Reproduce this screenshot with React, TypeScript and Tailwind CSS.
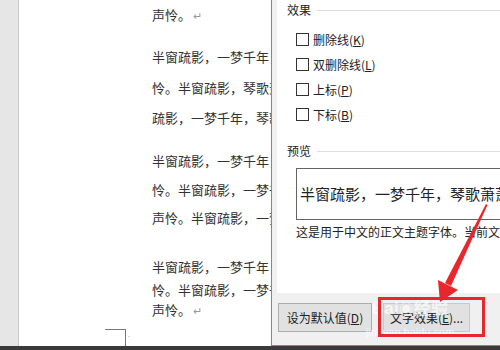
import React from 'react';

const cjk = { fontFamily: '"Noto Sans CJK SC", "Microsoft YaHei", sans-serif' };

// document lines: [margin-top, text]
const docLines: { mt: string; text: string; mark?: boolean }[] = [
  { mt: 'mt-[5px]', text: '声怜。', mark: true },
  { mt: 'mt-[22px]', text: '半窗疏影，一梦千年，琴歌萧萧' },
  { mt: 'mt-[11px]', text: '怜。半窗疏影，琴歌萧萧' },
  { mt: 'mt-[10px]', text: '疏影，一梦千年，琴歌萧萧' },
  { mt: 'mt-[23px]', text: '半窗疏影，一梦千年，琴歌' },
  { mt: 'mt-[9px]', text: '怜。半窗疏影，一梦千年' },
  { mt: 'mt-[8px]', text: '声怜。半窗疏影，一梦千年' },
  { mt: 'mt-[29px]', text: '半窗疏影，一梦千年，琴歌' },
  { mt: 'mt-[3px]', text: '怜。半窗疏影，一梦千年' },
  { mt: 'mt-0', text: '声怜。', mark: true },
];

function Check({ label, hotkey }: { label: string; hotkey: string }) {
  return (
    <div className="flex items-center h-[25px] pl-[19px]">
      <span className="w-[13px] h-[13px] border border-[#333] bg-white shrink-0" />
      <span className="ml-[4px] text-[12px] text-[#222]">
        {label}(<span className="underline">{hotkey}</span>)
      </span>
    </div>
  );
}

function Section({ title }: { title: string }) {
  return (
    <div className="flex items-center h-[20px] pl-[10px]">
      <span className="text-[12px] text-[#222]">{title}</span>
      <span className="flex-1 h-px bg-[#dcdcdc] ml-[6px]" />
    </div>
  );
}

export default function App() {
  return (
    <div className="relative w-[500px] h-[350px] flex flex-col overflow-hidden bg-white" style={cjk}>
      <div className="flex flex-1 min-h-0">
        {/* Gray margin */}
        <div className="w-[19px] shrink-0 bg-[#e6e6e6] border-r border-[#c8c8c8]" />

        {/* Document page */}
        <div className="relative w-[252px] shrink-0 bg-white overflow-hidden">
          <div className="pl-[133px]">
            {docLines.map((l, i) => (
              <div key={i} className={`${l.mt} h-[20px] leading-[20px] text-[13px] text-[#333] whitespace-nowrap`}>
                {l.text}
                {l.mark && <span className="text-[#9a9a9a] text-[11px] ml-[2px]">↵</span>}
              </div>
            ))}
          </div>
          {/* page corner mark */}
          <div className="absolute left-[86px] top-[329px] w-[21px] h-[20px] border-t border-r border-[#777]" />
          <span className="absolute left-[109px] top-[331px] text-[7px] leading-none text-[#999]">.</span>
        </div>

        {/* Dialog */}
        <div className="flex-1 min-w-0 overflow-hidden flex flex-col bg-[#f0f0f0] border-l border-b border-[#5b8fd0]">
          <div className="ml-[5px] h-[293px] bg-white overflow-hidden">
            <Section title="效果" />
            <div className="mt-[7px]">
              <Check label="删除线" hotkey="K" />
              <Check label="双删除线" hotkey="L" />
              <Check label="上标" hotkey="P" />
              <Check label="下标" hotkey="B" />
            </div>
            <div className="mt-[14px]">
              <Section title="预览" />
            </div>
            <div className="ml-[19px] mt-[7px] h-[52px] border-y border-l border-[#646464] flex items-center pl-[3px] overflow-hidden">
              <span className="text-[15px] text-[#222] whitespace-nowrap">半窗疏影，一梦千年，琴歌萧萧</span>
            </div>
            <div className="ml-[19px] mt-[3px] text-[12px] text-[#222] whitespace-nowrap overflow-hidden">
              这是用于中文的正文主题字体。当前文档主题定义将使用哪种字体。
            </div>
          </div>
          <div className="flex items-start pt-[10px] pl-[6px] gap-[11px]">
            <div className="w-[94px] h-[29px] shrink-0 bg-[#e1e1e1] border border-[#adadad] flex items-center justify-center text-[12px] text-[#222]">
              设为默认值(<span className="underline">D</span>)
            </div>
            <div className="w-[87px] h-[29px] shrink-0 bg-[#e1e1e1] border border-[#c8c8c8] flex items-center justify-center text-[12px] text-[#222]">
              文字效果(<span className="underline">E</span>)...
            </div>
          </div>
        </div>
      </div>
      <div className="h-[4px] bg-[#3a3a3a]" />

      {/* Baidu watermark */}
      <div className="absolute left-[340px] top-[300px] w-[140px] text-center text-white/70 leading-none pointer-events-none">
        <div className="text-[17px] font-bold tracking-wide" style={{ fontFamily: '"Liberation Sans", "Noto Sans CJK SC", sans-serif' }}>
          Bai<span className="text-[14px]">◉</span>经验
        </div>
        <div className="text-[11px] mt-[10px]" style={{ fontFamily: '"Liberation Sans", sans-serif' }}>jingyan.baidu.com</div>
      </div>

      {/* Red highlight box */}
      <div className="absolute left-[378px] top-[297px] w-[107px] h-[40px] border-[3px] border-[#e8262b]" />

      {/* Red arrow */}
      <svg className="absolute left-0 top-0 pointer-events-none" width="500" height="350" viewBox="0 0 500 350">
        <polygon points="486,204 487.5,205 451,286 445,283" fill="#e8262b" />
        <polygon points="440,302 438,280 458,290" fill="#e8262b" />
      </svg>
    </div>
  );
}
